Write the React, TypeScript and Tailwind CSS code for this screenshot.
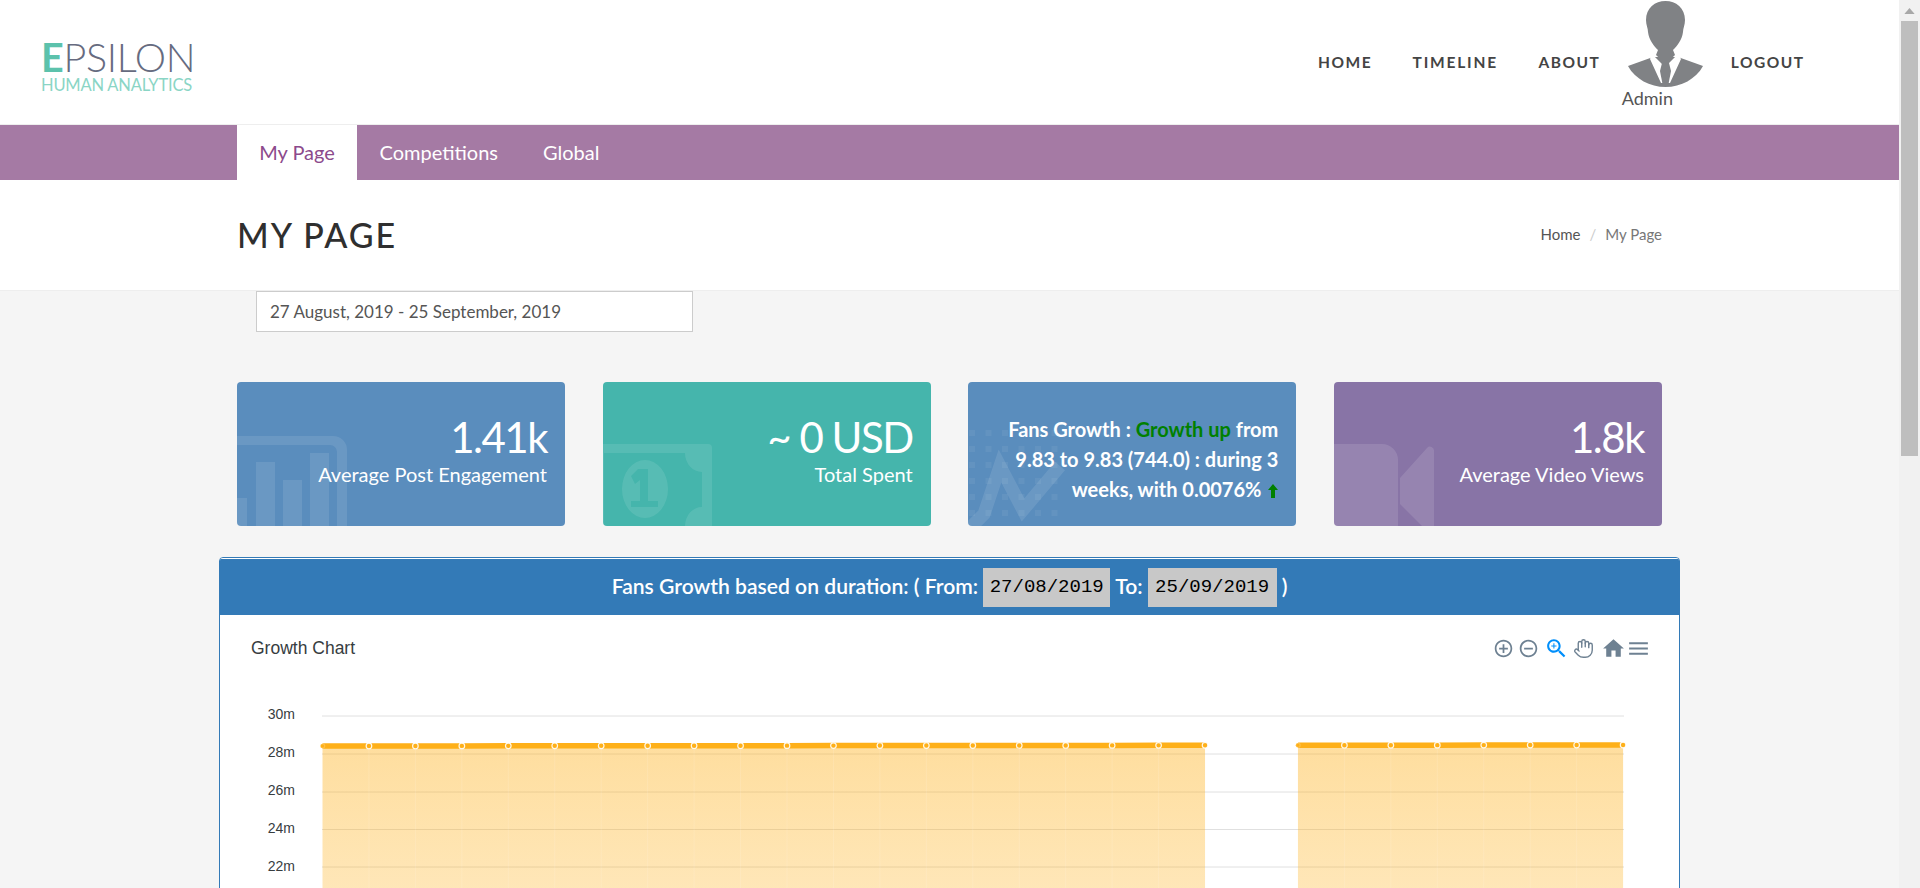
import React from "react";
import { Hand } from "lucide-react";

const lato = "font-['Lato',sans-serif]";

function Avatar() {
  return (
    <svg viewBox="0 0 75 88" className="w-[75px] h-[88px] block">
      <path d="M0 66L25 57H50L75 66C68 79 53 87 37.5 87C22 87 7 79 0 66Z" fill="#808285" />
      <path d="M24 54L37 67L50 54L53 59L42 83H33L22 59Z" fill="#fff" />
      <path d="M18 20C18 8 27 1 37.5 1S57 8 57 20C57 25 55 28 55 32C54 40 49 46 45 50L47 55L37.5 64L28 55L30 50C26 46 21 40 20 32C20 28 18 25 18 20Z" fill="#808285" />
      <path d="M34 63H41L43 71L40.5 84H34.5L32 71Z" fill="#808285" />
    </svg>
  );
}

function Card1() {
  return (
    <svg viewBox="0 0 328 144" className="absolute inset-0 w-full h-full">
      <g fill="#fff" fillOpacity="0.1">
        <path d="M0 54H96a14 14 0 0 1 14 14V144H100V70a7 7 0 0 0-7-7H0Z" />
        <rect x="0" y="116" width="10" height="28" />
        <rect x="19" y="80" width="19" height="64" />
        <rect x="46" y="98" width="19" height="46" />
        <rect x="73" y="71" width="19" height="73" />
      </g>
    </svg>
  );
}

function Card2() {
  return (
    <svg viewBox="0 0 328 144" className="absolute inset-0 w-full h-full">
      <path
        fill="#fff"
        fillOpacity="0.1"
        fillRule="evenodd"
        d="M0 62H105a4 4 0 0 1 4 4V144H0ZM1 71V144H82A17 19 0 0 1 99 125V90A17 19 0 0 1 82 71Z"
      />
      <path
        fill="#fff"
        fillOpacity="0.1"
        fillRule="evenodd"
        d="M19 107A23 29 0 1 1 65 107A23 29 0 1 1 19 107ZM28 94L35 87H45V119H55V125H28V119H37V98L32 102Z"
      />
    </svg>
  );
}

function Card3() {
  const dots: React.ReactElement[] = [];
  for (let r = 0; r < 7; r++) {
    for (let c = 0; c < 6; c++) {
      dots.push(<rect key={`${r}-${c}`} x={1 + c * 16.5} y={48 + r * 16} width="6" height="6" />);
    }
  }
  return (
    <svg viewBox="0 0 328 144" className="absolute inset-0 w-full h-full">
      <g fill="#fff" fillOpacity="0.06">{dots}</g>
      <polyline points="2,146 16,132 32,84 55,128 92,84" fill="none" stroke="#fff" strokeOpacity="0.1" strokeWidth="13" />
    </svg>
  );
}

function Card4() {
  return (
    <svg viewBox="0 0 328 144" className="absolute inset-0 w-full h-full">
      <g fill="#fff" fillOpacity="0.12">
        <path d="M0 62H48a16 16 0 0 1 16 16V144H0Z" />
        <path d="M66 96L93 66a4 4 0 0 1 7 3V144H88L66 122Z" />
      </g>
    </svg>
  );
}

function StatCard({ bg, icon, big, small }: { bg: string; icon: React.ReactNode; big: string; small: string }) {
  return (
    <div className={`relative w-[328px] h-[144px] rounded-[4px] overflow-hidden ${bg}`}>
      {icon}
      <div className="relative flex flex-col items-end pr-[18px] pt-[30px] text-white">
        <div className="text-[42px] leading-[50px] font-normal tracking-[-1.5px]">{big}</div>
        <div className="text-[20px] leading-[24px] font-normal">{small}</div>
      </div>
    </div>
  );
}

const gridY = [716, 754, 792, 829.5, 867];
const labels = [
  ["30m", 719],
  ["28m", 757],
  ["26m", 795],
  ["24m", 833],
  ["22m", 871],
] as const;
const px = (i: number) => 322.5 + i * 46.45;

function Chart() {
  const idxA = Array.from({ length: 20 }, (_, i) => i);
  const idxB = Array.from({ length: 8 }, (_, i) => i + 21);
  const y = (i: number) => 746 - (i / 28) * 1;
  const pts = (a: number[]) => a.map((i) => `${px(i)},${y(i)}`).join(" ");
  const area = (a: number[]) =>
    `${px(a[0])},${y(a[0])} ${pts(a)} ${px(a[a.length - 1])},888 ${px(a[0])},888`;
  return (
    <svg viewBox="220 680 1460 208" className="block w-[1460px] h-[208px]">
      <defs>
        <linearGradient id="ar" x1="0" y1="745" x2="0" y2="888" gradientUnits="userSpaceOnUse">
          <stop offset="0" stopColor="#FEB019" stopOpacity="0.42" />
          <stop offset="1" stopColor="#FEB019" stopOpacity="0.31" />
        </linearGradient>
      </defs>
      {gridY.map((g) => (
        <line key={g} x1="322" x2="1624" y1={g} y2={g} stroke="#e0e0e0" strokeWidth="1" />
      ))}
      {labels.map(([t, ly]) => (
        <text key={t} x="295" y={ly} textAnchor="end" fontFamily="'Liberation Sans',sans-serif" fontSize="14" fill="#373d3f">
          {t}
        </text>
      ))}
      <polygon points={area(idxA)} fill="url(#ar)" />
      <polygon points={area(idxB)} fill="url(#ar)" />
      {[...idxA.slice(1, -1), ...idxB.slice(1, -1)].map((i) => (
        <line key={i} x1={px(i)} x2={px(i)} y1="748" y2="888" stroke="#fff" strokeOpacity="0.12" />
      ))}
      <polyline points={pts(idxA)} fill="none" stroke="#FEB019" strokeWidth="5.5" />
      <polyline points={pts(idxB)} fill="none" stroke="#FEB019" strokeWidth="5.5" />
      {[...idxA, ...idxB].map((i) => {
        const edge = i === 0 || i === 21;
        return (
          <circle
            key={i}
            cx={px(i)}
            cy={y(i)}
            r={edge ? 2.2 : 2.8}
            fill="#FEB019"
            stroke="#fff"
            strokeOpacity={edge ? 0.2 : 0.9}
            strokeWidth="1.2"
          />
        );
      })}
    </svg>
  );
}

function Toolbar() {
  const c = "#6E8192";
  return (
    <div className="flex items-center h-[25px] mr-[28px]">
      <svg viewBox="0 0 24 24" className="w-[21px] h-[21px]" fill={c}>
        <path d="M13 7h-2v4H7v2h4v4h2v-4h4v-2h-4V7zm-1-5C6.49 2 2 6.49 2 12s4.49 10 10 10 10-4.49 10-10S17.51 2 12 2zm0 18c-4.41 0-8-3.59-8-8s3.59-8 8-8 8 3.59 8 8-3.59 8-8 8z" />
      </svg>
      <svg viewBox="0 0 24 24" className="w-[21px] h-[21px] ml-[4px]" fill={c}>
        <path d="M7 11v2h10v-2H7zm5-9C6.48 2 2 6.48 2 12s4.48 10 10 10 10-4.48 10-10S17.52 2 12 2zm0 18c-4.41 0-8-3.59-8-8s3.59-8 8-8 8 3.59 8 8-3.59 8-8 8z" />
      </svg>
      <svg viewBox="0 0 24 24" className="w-[25px] h-[25px] ml-[5px]" fill="#008FFB">
        <path d="M15.5 14h-.79l-.28-.27C15.41 12.59 16 11.11 16 9.5 16 5.91 13.09 3 9.5 3S3 5.91 3 9.5 5.91 16 9.5 16c1.61 0 3.09-.59 4.23-1.57l.27.28v.79l5 4.99L20.49 19l-4.99-5zm-6 0C7.01 14 5 11.99 5 9.5S7.01 5 9.5 5 14 7.01 14 9.5 11.99 14 9.5 14z" />
        <path d="M12 10h-2v2H9v-2H7V9h2V7h1v2h2v1z" />
      </svg>
      <Hand className="w-[21px] h-[21px] ml-[4px]" color={c} strokeWidth={1.6} />
      <svg viewBox="0 0 24 24" className="w-[25px] h-[25px] ml-[7px]" fill={c}>
        <path d="M10 20v-6h4v6h5v-8h3L12 3 2 12h3v8z" />
      </svg>
      <svg viewBox="0 0 24 24" className="w-[25px] h-[25px]" fill={c}>
        <path d="M3 18h18v-2H3v2zm0-5h18v-2H3v2zm0-7v2h18V6H3z" />
      </svg>
    </div>
  );
}

export default function App() {
  return (
    <div className={`flex h-[888px] overflow-hidden bg-[#f1f1f1] ${lato}`}>
      <div className="w-[1899px] shrink-0 bg-[#f5f5f5]">
        <header className="h-[125px] bg-white border-b border-[#eeeeee] flex items-start">
          <div className="ml-[41px] mt-[38px] w-[160px]">
            <div className="text-[39.5px] leading-[38px] font-light text-[#666b80] tracking-[-0.3px]">
              <span className="text-[#5cc2ac] font-bold">E</span>PSILON
            </div>
            <div className="text-[16.5px] leading-[18px] text-[#8ad5c5] tracking-[-0.2px]">HUMAN ANALYTICS</div>
          </div>
          <nav className="ml-auto mr-[94.5px] flex items-start text-[15.5px] font-bold tracking-[1.5px] text-[#444444]">
            <a className="mt-[52px] leading-[20px]">HOME</a>
            <a className="mt-[52px] leading-[20px] ml-[40.5px] tracking-[1.8px]">TIMELINE</a>
            <a className="mt-[52px] leading-[20px] ml-[40.5px]">ABOUT</a>
            <div className="ml-[21.5px] w-[80px] font-normal tracking-normal">
              <div className="ml-[6px]">
                <Avatar />
              </div>
              <div className="text-[18px] leading-[22px] -mt-[1px] font-normal text-[#555555]">Admin</div>
            </div>
            <a className="mt-[52px] leading-[20px] ml-[29px]">LOGOUT</a>
          </nav>
        </header>

        <div className="h-[55px] bg-[#a57aa4] pl-[237px] flex text-[20px] text-white">
          <a className="w-[120px] h-full pb-[1px] bg-white text-[#8c4a8c] flex items-center justify-center">My Page</a>
          <a className="px-[22.5px] pb-[1px] flex items-center">Competitions</a>
          <a className="px-[22.5px] pb-[1px] flex items-center">Global</a>
        </div>

        <div className="h-[111px] pb-[2px] bg-white border-b border-[#eeeeee] flex items-center justify-between px-[237px]">
          <h1 className="text-[34px] font-medium text-[#2f2f2f] tracking-[2px]">MY PAGE</h1>
          <div className="text-[15px] flex">
            <span className="text-[#555555]">Home</span>
            <span className="text-[#cccccc] mx-[9px]">/</span>
            <span className="text-[#777777]">My Page</span>
          </div>
        </div>

        <div className="w-[1425px] mx-auto">
          <div className="ml-[19px] w-[437px] h-[41px] bg-white border border-[#cccccc] px-[13px] flex items-center text-[17px] text-[#555555]">
            27 August, 2019 - 25 September, 2019
          </div>

          <div className="flex justify-between mt-[50px]">
            <StatCard bg="bg-[#5a8dbd]" icon={<Card1 />} big="1.41k" small="Average Post Engagement" />
            <StatCard bg="bg-[#45b5ac]" icon={<Card2 />} big="~ 0 USD" small="Total Spent" />
            <div className="relative w-[328px] h-[144px] rounded-[4px] overflow-hidden bg-[#5a8dbd]">
              <Card3 />
              <div className="relative pt-[32px] pr-[18px] pl-[24px] text-right text-white text-[20px] leading-[30px] font-bold">
                Fans Growth : <span className="text-[#008000]">Growth up</span> from 9.83 to 9.83 (744.0) : during 3 weeks, with 0.0076%{" "}
                <svg viewBox="0 0 10 14" className="inline-block w-[10px] h-[14px] ml-[2px] align-[-1px]">
                  <path d="M5 0L10 6H7V14H3V6H0Z" fill="#008000" />
                </svg>
              </div>
            </div>
            <StatCard bg="bg-[#8874a6]" icon={<Card4 />} big="1.8k" small="Average Video Views" />
          </div>

          <div className="-mx-[18px] mt-[31px] bg-white border border-[#337ab7] rounded-[4px] overflow-hidden h-[400px]">
            <div className="h-[57px] bg-[#337ab7] border-t-[1px] border-white flex items-center justify-center text-white text-[21.1px] font-semibold">
              <span className="pb-[2px]">Fans Growth based on duration: ( From:</span>
              <span className="bg-[#c8c8c8] text-black font-normal font-['Liberation_Mono',monospace] text-[19px] h-[39px] w-[127px] mx-[5px] flex items-center justify-center">27/08/2019</span>
              <span className="pb-[2px]">To:</span>
              <span className="bg-[#c8c8c8] text-black font-normal font-['Liberation_Mono',monospace] text-[19px] h-[39px] w-[129px] mx-[5px] flex items-center justify-center">25/09/2019</span>
              <span className="pb-[2px]">)</span>
            </div>
            <div className="flex justify-between items-center pl-[31px] mt-[21px] h-[25px]">
              <span className="font-['Liberation_Sans',sans-serif] text-[#373d3f] text-[17.5px]">Growth Chart</span>
              <Toolbar />
            </div>
            <div className="mt-[19px]">
              <Chart />
            </div>
          </div>
        </div>
      </div>

      <div className="flex-1 px-[2px]">
        <div className="h-[21px] flex items-center justify-center">
          <svg viewBox="0 0 12 7" className="w-[11px] h-[6px]">
            <path d="M0 7L6 0L12 7Z" fill="#a8a8a8" />
          </svg>
        </div>
        <div className="w-[17px] h-[435px] bg-[#bebebe]" />
      </div>
    </div>
  );
}
